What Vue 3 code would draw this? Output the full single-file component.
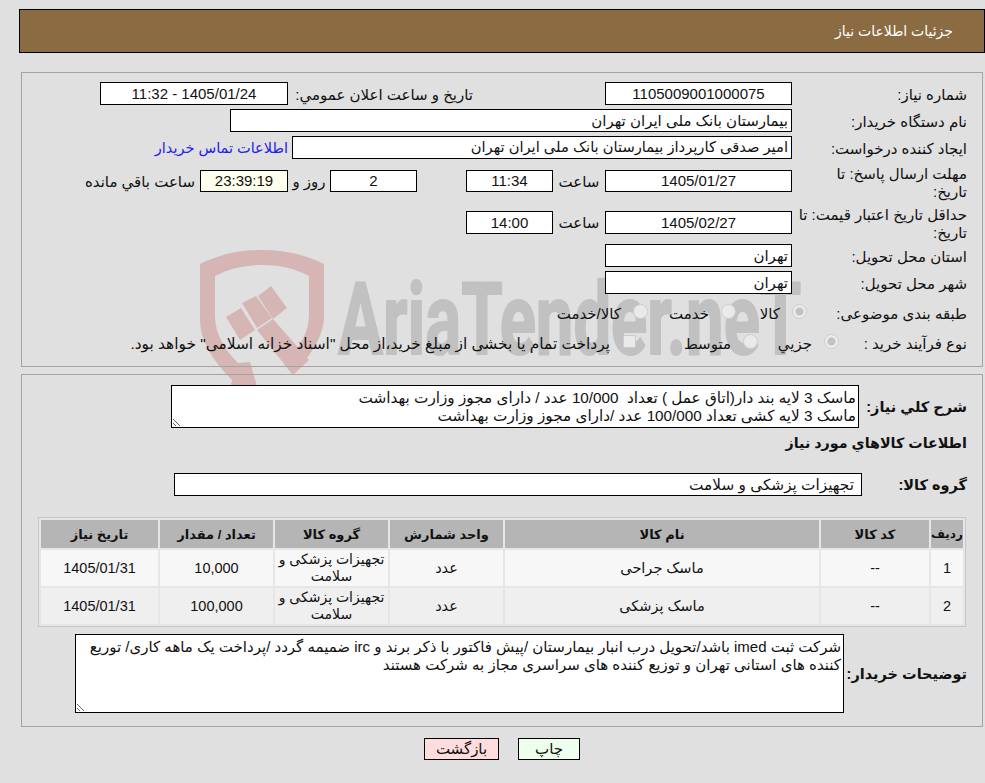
<script setup>
const headers = ["ردیف", "کد کالا", "نام کالا", "واحد شمارش", "گروه کالا", "تعداد / مقدار", "تاریخ نیاز"];

const rows = [
  { id: 1, code: "--", name: "ماسک جراحی", unit: "عدد", group: "تجهیزات پزشکی و سلامت", qty: "10,000", date: "1405/01/31" },
  { id: 2, code: "--", name: "ماسک پزشکی", unit: "عدد", group: "تجهیزات پزشکی و سلامت", qty: "100,000", date: "1405/01/31" },
];

const needText = "ماسک 3 لایه بند دار(اتاق عمل ) تعداد  10/000 عدد / دارای مجوز وزارت بهداشت\nماسک 3 لایه کشی تعداد 100/000 عدد /دارای مجوز وزارت بهداشت";
const buyerNote = "شرکت ثبت imed باشد/تحویل درب انبار بیمارستان /پیش فاکتور با ذکر برند و irc ضمیمه گردد /پرداخت یک ماهه کاری/ توریع کننده های استانی تهران و توزیع کننده های سراسری مجاز به شرکت هستند";
</script>

<template>
  <div class="page">
    <div class="watermark" aria-hidden="true">
      <svg class="watermark__shield" width="126" height="140" viewBox="0 0 126 140">
        <path fill="#d6b5b5" d="M0 14 C20 4 40 0 62 0 C84 0 104 4 124 14 L124 66 C124 88 108 108 93 125 L84 114 L93 105 C102 92 109 80 109 65 L109 26 C94 18 78 15 62 15 C46 15 30 18 15 26 L15 66 C15 84 25 100 38 113 L50 112 L58 140 L30 140 L32 130 C12 110 0 90 0 70 Z" />
        <path fill="#d6b5b5" d="M26 67 L41 58 L55 80 L40 90 Z M42 53 L56 46 L72 68 L57 78 Z M58 46 L71 36 L87 58 L73 69 Z M57 80 L73 69 L109 110 L93 125 Z" />
      </svg>
      <span class="watermark__text">AriaTender.neT</span>
    </div>

    <header class="title-bar">جزئیات اطلاعات نیاز</header>

    <section class="panel panel--info">
      <div class="row">
        <span class="label">شماره نیاز:</span>
        <div class="box box--date">1105009001000075</div>
        <span class="label-inline announce-label">تاریخ و ساعت اعلان عمومي:</span>
        <div class="box box--date announce-box">1405/01/24 - 11:32</div>
      </div>
      <div class="row row--near">
        <span class="label">نام دستگاه خریدار:</span>
        <div class="box box--text buyer-box">بیمارستان بانک ملی ایران تهران</div>
      </div>
      <div class="row row--near">
        <span class="label">ایجاد کننده درخواست:</span>
        <div class="box box--text requester-box">امیر صدقی کارپرداز بیمارستان بانک ملی ایران تهران</div>
        <a class="contact-link" href="#">اطلاعات تماس خریدار</a>
      </div>
      <div class="row row--deadline">
        <span class="label">مهلت ارسال پاسخ: تا<br />تاریخ:</span>
        <div class="box box--date">1405/01/27</div>
        <span class="label-inline hour-label">ساعت</span>
        <div class="box box--small">11:34</div>
        <div class="box box--small days-box">2</div>
        <span class="label-inline days-label">روز و</span>
        <div class="box box--small box--timer">23:39:19</div>
        <span class="label-inline remain-label">ساعت باقي مانده</span>
      </div>
      <div class="row row--validity">
        <span class="label">حداقل تاریخ اعتبار قیمت: تا تاریخ:</span>
        <div class="box box--date">1405/02/27</div>
        <span class="label-inline hour-label">ساعت</span>
        <div class="box box--small">14:00</div>
      </div>
      <div class="row row--province">
        <span class="label">استان محل تحویل:</span>
        <div class="box box--date box--start">تهران</div>
      </div>
      <div class="row row--near">
        <span class="label">شهر محل تحویل:</span>
        <div class="box box--date box--start">تهران</div>
      </div>
      <div class="row row--category">
        <span class="label">طبقه بندی موضوعی:</span>
        <div class="options options--category">
          <label class="option"><span class="radio radio--on"></span>کالا</label>
          <label class="option"><span class="radio"></span>خدمت</label>
          <label class="option"><span class="radio"></span>کالا/خدمت</label>
        </div>
      </div>
      <div class="row row--process">
        <span class="label">نوع فرآیند خرید :</span>
        <div class="options options--process">
          <label class="option"><span class="radio radio--on"></span>جزيي</label>
          <label class="option"><span class="radio"></span>متوسط</label>
          <label class="option option--long"><span class="check"></span>پرداخت تمام یا بخشی از مبلغ خرید،از محل "اسناد خزانه اسلامی" خواهد بود.</label>
        </div>
      </div>
    </section>

    <section class="panel panel--items">
      <div class="need-row">
        <span class="label-bold">شرح کلي نیاز:</span>
        <textarea class="need-text" readonly :value="needText"></textarea>
      </div>
      <h3 class="items-title">اطلاعات کالاهاي مورد نیاز</h3>
      <div class="group-row">
        <span class="label-bold">گروه کالا:</span>
        <div class="box box--text group-box">تجهیزات پزشکی و سلامت</div>
      </div>

      <table class="items">
        <colgroup>
          <col style="width: 32px" />
          <col style="width: 108px" />
          <col style="width: 314px" />
          <col style="width: 113px" />
          <col style="width: 113px" />
          <col style="width: 113px" />
          <col style="width: 117px" />
        </colgroup>
        <thead>
          <tr>
            <th v-for="h in headers" :key="h">{{ h }}</th>
          </tr>
        </thead>
        <tbody>
          <tr v-for="row in rows" :key="row.id">
            <td>{{ row.id }}</td>
            <td>{{ row.code }}</td>
            <td>{{ row.name }}</td>
            <td>{{ row.unit }}</td>
            <td class="group-cell">{{ row.group }}</td>
            <td>{{ row.qty }}</td>
            <td>{{ row.date }}</td>
          </tr>
        </tbody>
      </table>

      <div class="note-row">
        <span class="label-bold">توضیحات خریدار:</span>
        <textarea class="note-text" readonly :value="buyerNote"></textarea>
      </div>
    </section>

    <div class="actions">
      <button class="btn btn--print" type="button">چاپ</button>
      <button class="btn btn--back" type="button">بازگشت</button>
    </div>
  </div>
</template>

<style scoped>
.page {
  position: relative;
  width: 985px;
  height: 783px;
  overflow: hidden;
  direction: rtl;
  background: #e0e0e0;
  color: #111;
  font-family: "Liberation Sans", "DejaVu Sans", sans-serif;
  font-size: 15px;
  padding-top: 9px;
  box-sizing: border-box;
}

.watermark {
  position: absolute;
  left: 200px;
  top: 250px;
  width: 620px;
  height: 140px;
  direction: ltr;
}

.watermark__shield {
  position: absolute;
  left: 0;
  top: 0;
}

.watermark__text {
  position: absolute;
  left: 138px;
  top: 20px;
  font-family: Roboto, "Liberation Sans", sans-serif;
  font-size: 100px;
  line-height: 100px;
  font-weight: 700;
  color: #c1c1c1;
  -webkit-text-stroke: 2px #c1c1c1;
  white-space: nowrap;
  transform-origin: 0 0;
  transform: scaleX(0.67);
}

.title-bar {
  position: relative;
  box-sizing: border-box;
  height: 44px;
  margin-left: 19px;
  padding-right: 31px;
  line-height: 43px;
  color: #fff;
  background: #8b6b42;
  border: 1px solid #000;
  font-size: 14px;
}

.panel {
  position: relative;
  box-sizing: border-box;
  margin-left: 21px;
  margin-right: 2px;
  border: 1px solid #a3a3a3;
  padding-right: 15px;
}

.panel--info {
  height: 295px;
  margin-top: 19px;
  padding-top: 9px;
}

.panel--items {
  height: 353px;
  margin-top: 7px;
  padding-top: 10px;
}

.row {
  display: flex;
  align-items: center;
  min-height: 23px;
}

.row--near { margin-top: 4px; }
.row--deadline { margin-top: 5px; height: 34px; }
.row--deadline .box { height: 22px; line-height: 20px; }
.row--validity { margin-top: 7px; height: 34px; }
.row--province { margin-top: 5px; }
.row--category { margin-top: 7px; }
.row--process { margin-top: 7px; }

.label {
  box-sizing: border-box;
  width: 175px;
  padding-left: 5px;
  padding-top: 3px;
  flex-shrink: 0;
  line-height: 18px;
}

.label-inline {
  white-space: nowrap;
  padding-top: 2px;
}

.box {
  box-sizing: border-box;
  height: 23px;
  line-height: 21px;
  background: #fff;
  border: 1px solid #000;
  flex-shrink: 0;
  white-space: nowrap;
  overflow: hidden;
}

.box--date {
  width: 187px;
  text-align: center;
}

.box--text {
  padding-right: 3px;
}

.box--start {
  text-align: right;
  padding-right: 3px;
}

.box--small {
  width: 87px;
  text-align: center;
}

.box--timer {
  width: 88px;
  background: #ffffee;
}

.announce-label {
  width: 180px;
  margin-right: 132px;
  margin-left: 5px;
}

.announce-box {
  width: 188px;
}

.buyer-box {
  width: 562px;
}

.requester-box {
  width: 500px;
  margin-left: 4px;
  font-size: 14.7px;
}

.contact-link {
  color: #2020f0;
  font-size: 14.5px;
  text-decoration: none;
  white-space: nowrap;
}

.hour-label {
  width: 52px;
  text-align: center;
}

.days-box {
  margin-right: 49px;
}

.days-label {
  width: 42px;
  text-align: center;
}

.remain-label {
  margin-right: 5px;
}

.options {
  display: flex;
  align-items: center;
  padding-top: 2px;
}

.options--category { margin-right: -15px; }
.options--process { margin-right: -47px; }

.option {
  display: flex;
  align-items: center;
  white-space: nowrap;
}

.option--long {
  font-size: 15.4px;
}

.options--category .option:nth-child(1) { width: 71px; }
.options--category .option:nth-child(2) { width: 88px; }
.options--process .option:nth-child(1) { width: 81px; }
.options--process .option:nth-child(2) { width: 122px; }

.radio {
  box-sizing: border-box;
  width: 15px;
  height: 15px;
  border-radius: 50%;
  margin-left: 12px;
  margin-top: -5px;
  flex-shrink: 0;
  background: #eaeaea;
  border: 1px solid #cdcdcd;
}

.radio--on {
  background: radial-gradient(circle, #c2c2c2 0 3.5px, #ececec 4.5px);
}

.check {
  box-sizing: border-box;
  width: 13px;
  height: 13px;
  margin-left: 13px;
  margin-top: -5px;
  flex-shrink: 0;
  background: #eaeaea;
  border: 1px solid #cdcdcd;
  border-radius: 2px;
}

.need-row,
.group-row,
.note-row {
  display: flex;
  align-items: center;
}

.label-bold {
  font-weight: 700;
  font-size: 14.5px;
  white-space: nowrap;
}

.need-row .label-bold {
  width: 108px;
}

textarea {
  display: block;
  box-sizing: border-box;
  margin: 0;
  padding: 1px 2px 0 2px;
  border: 1px solid #000;
  border-radius: 0;
  outline: none;
  background: #fff;
  color: #111;
  font: inherit;
  font-size: 15.25px;
  line-height: 18px;
  direction: rtl;
}

.need-text {
  width: 688px;
  height: 43px;
  padding-top: 3px;
}

.items-title {
  margin: 5px 0 0;
  height: 20px;
  line-height: 20px;
  font-size: 14.3px;
  font-weight: 700;
}

.group-row {
  margin-top: 20px;
}

.group-row .label-bold {
  width: 105px;
}

.group-box {
  width: 688px;
  padding-right: 7px;
  font-size: 15.3px;
}

.items {
  table-layout: fixed;
  border-collapse: separate;
  border-spacing: 2px;
  width: 928px;
  margin: 21px 1px 0 0;
  border: 1px solid #c8c8c8;
  background: #e6e6e6;
  text-align: center;
  box-sizing: border-box;
}

.items th {
  height: 28px;
  padding: 0;
  background: #b5b5b5;
  font-size: 13px;
  font-weight: 700;
}

.items th:first-child {
  font-size: 12px;
}

.items td {
  height: 36px;
  padding: 0;
  font-size: 14.5px;
  line-height: 17px;
}

.items td.group-cell {
  font-size: 14px;
}

.items tbody tr:nth-child(odd) td { background: #f7f7f7; }
.items tbody tr:nth-child(even) td { background: #efefef; }

.note-row {
  margin-top: 7px;
}

.note-row .label-bold {
  width: 123px;
}

.note-text {
  width: 769px;
  height: 79px;
  padding-top: 3px;
  font-size: 15px;
}

.actions {
  position: relative;
  display: flex;
  gap: 19px;
  margin-top: 11px;
  padding-right: 405px;
}

.btn {
  box-sizing: border-box;
  height: 22px;
  padding: 0;
  border: 1px solid #000;
  border-radius: 0;
  color: #111;
  font: inherit;
  line-height: 20px;
}

.btn--print {
  width: 62px;
  background: #eeffee;
}

.btn--back {
  width: 75px;
  background: #ffdddd;
}
</style>
